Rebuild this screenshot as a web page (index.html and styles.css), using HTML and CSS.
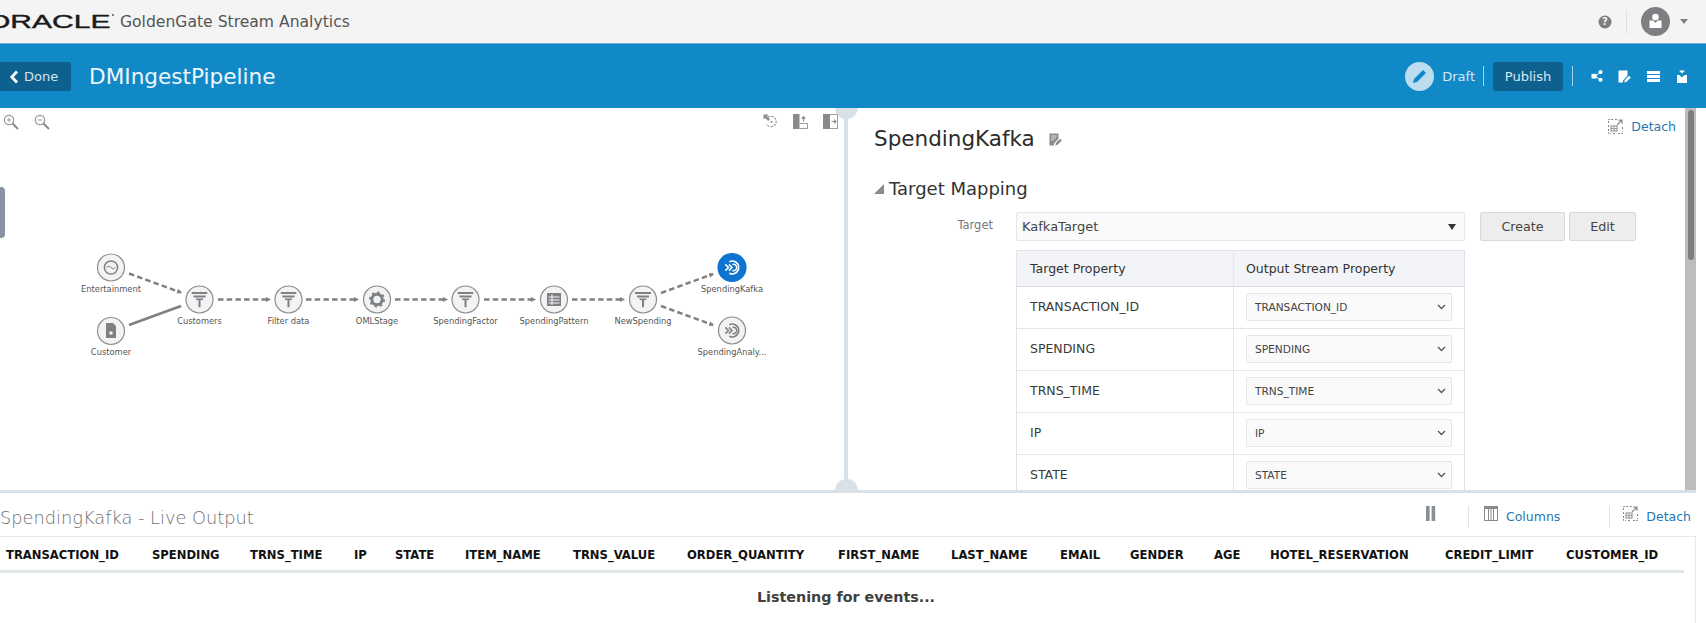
FILE: index.html
```html
<!DOCTYPE html>
<html lang="en">
<head>
<meta charset="utf-8">
<title>GoldenGate Stream Analytics</title>
<link rel="stylesheet" href="styles.css">
</head>
<body>
<svg class="defs" width="0" height="0" aria-hidden="true">
  <defs>
    <symbol id="i-funnel" viewBox="0 0 16 16">
      <rect x="0" y="0.5" width="16" height="2" fill="#7d8186"/>
      <rect x="2" y="4" width="12" height="2" fill="#7d8186"/>
      <rect x="4.5" y="7" width="7" height="1.6" fill="#7d8186"/>
      <rect x="7" y="8" width="2" height="8" fill="#7d8186"/>
    </symbol>
    <symbol id="i-target" viewBox="0 0 18 18">
      <path d="M6 2.6A7.2 7.2 0 1 1 6 15.4" fill="none" stroke="currentColor" stroke-width="1.8"/>
      <path d="M9.5 5.6A3.6 3.6 0 1 1 9.5 12.4" fill="none" stroke="currentColor" stroke-width="1.6"/>
      <path d="M1.5 5.5L5 9L1.5 12.5M5.5 5.5L9 9L5.5 12.5" fill="none" stroke="currentColor" stroke-width="1.7"/>
    </symbol>
    <symbol id="i-detach" viewBox="0 0 15 15">
      <path d="M0.5 4V0.5H5M7 0.5H9M0.5 6V8M0.5 10V14.5H3M5 14.5H8M10 14.5H14.5V12M14.5 10V8" fill="none" stroke="#8a8a8a" stroke-width="1" stroke-dasharray="2 1"/>
      <path d="M9 6L13.5 1.5M10.5 1.2H14V4.7" fill="none" stroke="#8a8a8a" stroke-width="1.2"/>
      <rect x="3" y="7" width="6" height="5" fill="none" stroke="#8a8a8a" stroke-width="1"/>
      <path d="M3 9.5H9M6 7V12" stroke="#8a8a8a" stroke-width="0.8"/>
    </symbol>
    <symbol id="i-note" viewBox="0 0 13 13">
      <path d="M0.5 0.5H9.5V5.5L5 10.5V12.5H0.5Z" fill="currentColor"/>
      <path d="M2 3H8M2 5H7M2 7H5" stroke="#fff" stroke-width="0.9" opacity=".8"/>
      <path d="M6.3 12.5L6.8 10L11 5.8L12.8 7.6L8.6 11.8Z" fill="currentColor"/>
    </symbol>
    <marker id="arrow" markerWidth="6" markerHeight="6" refX="4" refY="3" orient="auto" markerUnits="userSpaceOnUse">
      <path d="M0 0.5L5 3L0 5.5Z" fill="#808080"/>
    </marker>
  </defs>
</svg>

<header class="topbar">
  <div class="brand">
    <span class="logo"><span class="logo-text">ORACLE</span></span>
    <span class="logo-reg"></span>
    <span class="product">GoldenGate Stream Analytics</span>
  </div>
  <div class="top-actions">
    <svg class="help" width="14" height="14" viewBox="0 0 14 14"><circle cx="7" cy="7" r="6.5" fill="#7f7f7f"/><text x="7" y="10.4" class="help-q">?</text></svg>
    <span class="top-sep"></span>
    <svg class="avatar" width="29" height="29" viewBox="0 0 29 29"><circle cx="14.5" cy="14.5" r="14.5" fill="#7d7f82"/><circle cx="14.5" cy="10" r="3.3" fill="#fff"/><path d="M8.5 13.5H12.5L14.5 16L16.5 13.5H20.5V21H8.5Z" fill="#fff"/></svg>
    <span class="caret"></span>
  </div>
</header>

<section class="pipebar">
  <div class="pipe-left">
    <button class="done"><svg width="10" height="14" viewBox="0 0 10 14"><path d="M8 1.5L2.8 7L8 12.5" fill="none" stroke="#fff" stroke-width="2.8"/></svg>Done</button>
    <h1 class="pipe-title">DMIngestPipeline</h1>
  </div>
  <div class="pipe-right">
    <svg class="draft-icon" width="29" height="29" viewBox="0 0 29 29"><circle cx="14.5" cy="14.5" r="14.5" fill="#bcdcef"/><path d="M8 21L9 17L18 8L21 11L12 20Z" fill="#1088c6"/></svg>
    <span class="draft">Draft</span>
    <span class="bar-sep sep-a"></span>
    <button class="publish">Publish</button>
    <span class="bar-sep sep-b"></span>
    <svg class="bar-icon i1" width="13" height="12" viewBox="0 0 14 14"><rect x="0" y="4.5" width="6" height="5.5" fill="#fff"/><path d="M5 7L10 3M5 7.5L10 11" stroke="#fff" stroke-width="1"/><circle cx="10.5" cy="2.4" r="2.4" fill="#fff"/><circle cx="10.5" cy="11.4" r="2.4" fill="#fff"/></svg>
    <svg class="bar-icon i2" width="13" height="13" viewBox="0 0 13 13" color="#fff"><use href="#i-note"/></svg>
    <svg class="bar-icon i3" width="13" height="11" viewBox="0 0 13 11"><rect width="13" height="3" fill="#fff"/><rect y="4" width="13" height="3" fill="#fff"/><rect y="8" width="13" height="3" fill="#fff"/></svg>
    <svg class="bar-icon i4" width="10" height="13" viewBox="0 0 10 13"><path d="M0 5H2.5L5 7.5L7.5 5H10V13H0Z" fill="#fff"/><path d="M2 0.5H8L5 3.5Z" fill="#fff"/></svg>
  </div>
</section>

<main class="workspace">
  <section class="canvas">
    <div class="canvas-tools">
      <div class="tool-group zoom-tools">
        <svg width="16" height="16" viewBox="0 0 16 16"><circle cx="6" cy="6" r="4.7" fill="none" stroke="#9a9a9a" stroke-width="1.2"/><path d="M3.8 6H8.2M6 3.8V8.2" stroke="#9a9a9a"/><path d="M9.5 9.5L15 15" stroke="#8a8a8a" stroke-width="2"/></svg>
        <svg width="16" height="16" viewBox="0 0 16 16"><circle cx="6" cy="6" r="4.7" fill="none" stroke="#9a9a9a" stroke-width="1.2"/><path d="M3.8 6H8.2" stroke="#9a9a9a"/><path d="M9.5 9.5L15 15" stroke="#8a8a8a" stroke-width="2"/></svg>
      </div>
      <div class="tool-group view-tools">
        <svg width="15" height="15" viewBox="0 0 15 15"><path d="M5 3.2A5.2 5.2 0 1 1 3.4 10" fill="none" stroke="#9a9a9a" stroke-width="1.2" stroke-dasharray="2.4 1"/><circle cx="8.5" cy="8" r="1" fill="#8a8a8a"/><path d="M0.5 0.5H5.5L4 2.2L7 5.2L5.2 7L2.2 4L0.5 5.5Z" fill="#8a8a8a"/></svg>
        <svg width="15" height="15" viewBox="0 0 15 15"><rect x="0" y="0" width="6.5" height="15" fill="#8a8a8a"/><path d="M6.5 9.5H14.5V14.5H6.5" fill="none" stroke="#9a9a9a"/><path d="M10.5 7.5V3M8.7 4.8L10.5 2.6L12.3 4.8" fill="none" stroke="#8a8a8a" stroke-width="1.1"/></svg>
        <svg width="15" height="15" viewBox="0 0 15 15"><rect x="0.5" y="0.5" width="14" height="14" fill="#fff" stroke="#a0a0a0"/><rect x="0" y="0" width="7" height="15" fill="#8a8a8a"/><path d="M8.5 7.5H13M11.2 5.6L13 7.5L11.2 9.4" fill="none" stroke="#8a8a8a" stroke-width="1.1"/></svg>
      </div>
    </div>
    <span class="side-handle"></span>
    <svg class="diagram" width="844" height="383" viewBox="0 108 844 383">
      <g class="links">
        <path class="dash" d="M129 273.5L181 292.5"/>
        <path class="solid" d="M129 325L181 306"/>
        <path class="dash" d="M218 299.5H270"/>
        <path class="dash" d="M306 299.5H358"/>
        <path class="dash" d="M395 299.5H447"/>
        <path class="dash" d="M484 299.5H535"/>
        <path class="dash" d="M572 299.5H624"/>
        <path class="dash" d="M661 293L713 274"/>
        <path class="dash" d="M661 306L713 325"/>
      </g>
      <g class="node" transform="translate(111 267.5)">
        <circle r="13.5"/>
        <circle r="6.6" class="glyph-line"/><path d="M-4.5 0Q-2.2 -3 0 0T4.5 0" class="glyph-line thin"/>
        <text y="24">Entertainment</text>
      </g>
      <g class="node" transform="translate(111 331)">
        <circle r="13.5"/>
        <path d="M-5 -8H2L5 -5V7H-5Z" fill="#7d8186"/><circle cy="2" r="1.8" fill="#f2f2f2"/>
        <text y="24">Customer</text>
      </g>
      <g class="node" transform="translate(199.5 299.5)">
        <circle r="13.5"/><use href="#i-funnel" x="-8" y="-8" width="16" height="16"/>
        <text y="24">Customers</text>
      </g>
      <g class="node" transform="translate(288.5 299.5)">
        <circle r="13.5"/><use href="#i-funnel" x="-8" y="-8" width="16" height="16"/>
        <text y="24">Filter data</text>
      </g>
      <g class="node" transform="translate(377 299.5)">
        <circle r="13.5"/>
        <circle r="5.2" fill="none" stroke="#7d8186" stroke-width="3"/>
        <circle r="7" fill="none" stroke="#7d8186" stroke-width="2" stroke-dasharray="2.4 3.1"/>
        <text y="24">OMLStage</text>
      </g>
      <g class="node" transform="translate(465.5 299.5)">
        <circle r="13.5"/><use href="#i-funnel" x="-8" y="-8" width="16" height="16"/>
        <text y="24">SpendingFactor</text>
      </g>
      <g class="node" transform="translate(554 299.5)">
        <circle r="13.5"/>
        <rect x="-7" y="-6.5" width="14" height="13" fill="#7d8186"/>
        <path d="M-5.5 -2.5H5.5M-5.5 0.5H5.5M-5.5 3.5H5.5M-2 -5V5.5" stroke="#f2f2f2" stroke-width="1.1"/>
        <text y="24">SpendingPattern</text>
      </g>
      <g class="node" transform="translate(643 299.5)">
        <circle r="13.5"/><use href="#i-funnel" x="-8" y="-8" width="16" height="16"/>
        <text y="24">NewSpending</text>
      </g>
      <g class="node active" transform="translate(732 267.5)">
        <circle r="14"/><use href="#i-target" x="-8" y="-8" width="16" height="16" color="#fff"/>
        <text y="24">SpendingKafka</text>
      </g>
      <g class="node" transform="translate(732 330.5)">
        <circle r="13.5"/><use href="#i-target" x="-8" y="-8" width="16" height="16" color="#7d8186"/>
        <text y="24.5">SpendingAnaly...</text>
      </g>
    </svg>
  </section>

  <div class="vsplit"><span class="knob knob-top"></span><span class="knob knob-bottom"></span></div>

  <section class="props">
    <div class="props-body">
      <div class="props-head">
        <div class="props-title">
          <h2>SpendingKafka</h2>
          <svg width="13" height="13" viewBox="0 0 13 13" color="#8a8a8a"><use href="#i-note"/></svg>
        </div>
        <a class="link detach-top"><svg width="15" height="15" viewBox="0 0 15 15"><use href="#i-detach"/></svg>Detach</a>
      </div>
      <h3 class="section-title"><span class="tri"></span>Target Mapping</h3>
      <div class="target-row">
        <label class="target-label">Target</label>
        <div class="target-select">KafkaTarget<span class="sel-caret"></span></div>
        <button class="btn btn-create">Create</button>
        <button class="btn btn-edit">Edit</button>
      </div>
      <div class="map-table">
        <div class="map-row map-head"><div class="cell-a">Target Property</div><div class="cell-b">Output Stream Property</div></div>
        <div class="map-row"><div class="cell-a">TRANSACTION_ID</div><div class="cell-b"><div class="mini-select">TRANSACTION_ID<svg width="9" height="6" viewBox="0 0 9 6"><path d="M1 1L4.5 4.5L8 1" fill="none" stroke="#555" stroke-width="1.3"/></svg></div></div></div>
        <div class="map-row"><div class="cell-a">SPENDING</div><div class="cell-b"><div class="mini-select">SPENDING<svg width="9" height="6" viewBox="0 0 9 6"><path d="M1 1L4.5 4.5L8 1" fill="none" stroke="#555" stroke-width="1.3"/></svg></div></div></div>
        <div class="map-row"><div class="cell-a">TRNS_TIME</div><div class="cell-b"><div class="mini-select">TRNS_TIME<svg width="9" height="6" viewBox="0 0 9 6"><path d="M1 1L4.5 4.5L8 1" fill="none" stroke="#555" stroke-width="1.3"/></svg></div></div></div>
        <div class="map-row"><div class="cell-a">IP</div><div class="cell-b"><div class="mini-select">IP<svg width="9" height="6" viewBox="0 0 9 6"><path d="M1 1L4.5 4.5L8 1" fill="none" stroke="#555" stroke-width="1.3"/></svg></div></div></div>
        <div class="map-row"><div class="cell-a">STATE</div><div class="cell-b"><div class="mini-select">STATE<svg width="9" height="6" viewBox="0 0 9 6"><path d="M1 1L4.5 4.5L8 1" fill="none" stroke="#555" stroke-width="1.3"/></svg></div></div></div>
      </div>
    </div>
    <div class="scrollbar"><span class="thumb"></span></div>
  </section>
</main>

<div class="hsplit"></div>

<section class="live">
  <div class="live-head">
    <h2 class="live-title">SpendingKafka - Live Output</h2>
    <div class="live-actions">
      <svg class="pause" width="10" height="15" viewBox="0 0 10 15"><rect width="3.6" height="15" fill="#8a8f94"/><rect x="5.6" width="3.6" height="15" fill="#8a8f94"/></svg>
      <span class="live-sep sep-c"></span>
      <a class="link columns"><svg width="14" height="15" viewBox="0 0 14 15"><rect x="0.5" y="0.5" width="13" height="14" fill="none" stroke="#8a8a8a"/><rect y="0" width="14" height="3" fill="#8a8a8a"/><path d="M4.5 3V15M7 3V15M9.5 3V15" stroke="#8a8a8a"/></svg>Columns</a>
      <span class="live-sep sep-d"></span>
      <a class="link detach-bottom"><svg width="15" height="15" viewBox="0 0 15 15"><use href="#i-detach"/></svg>Detach</a>
    </div>
  </div>
  <div class="grid-wrap">
    <div class="grid-head">
      <div>TRANSACTION_ID</div><div>SPENDING</div><div>TRNS_TIME</div><div>IP</div><div>STATE</div><div>ITEM_NAME</div><div>TRNS_VALUE</div><div>ORDER_QUANTITY</div><div>FIRST_NAME</div><div>LAST_NAME</div><div>EMAIL</div><div>GENDER</div><div>AGE</div><div>HOTEL_RESERVATION</div><div>CREDIT_LIMIT</div><div>CUSTOMER_ID</div>
    </div>
    <p class="listening">Listening for events...</p>
  </div>
</section>
</body>
</html>
```
FILE: styles.css
```css
* { box-sizing: border-box; }
html, body { margin: 0; padding: 0; }
body {
  width: 1706px;
  height: 623px;
  overflow: hidden;
  background: #fff;
  font-family: "DejaVu Sans", sans-serif;
  color: #333;
  display: flex;
  flex-direction: column;
}
h1, h2, h3, p { margin: 0; font-weight: 400; }
button { font-family: inherit; cursor: pointer; }
.defs { position: absolute; }

/* top header */
.topbar {
  flex: 0 0 44px;
  background: #f4f4f4;
  border-bottom: 1px solid #6fb2d9;
  display: flex;
  align-items: center;
  justify-content: space-between;
  padding-right: 18px;
}
.brand { display: flex; align-items: center; position: relative; }
.logo { display: block; width: 116px; height: 20px; overflow: hidden; position: relative; }
.logo-text {
  display: block;
  font-family: "Liberation Sans", sans-serif;
  font-size: 19px;
  line-height: 20px;
  color: #1a1a1a;
  transform-origin: 0 50%;
  transform: scaleX(1.58);
  margin-left: -13px;
  -webkit-text-stroke: 0.4px #1a1a1a;
}
.logo-reg { position: absolute; left: 112px; top: 2px; width: 2px; height: 2px; background: #555; border-radius: 50%; }
.product { font-size: 15.6px; color: #555; margin-left: 4px; }
.top-actions { display: flex; align-items: center; }
.top-sep { width: 1px; height: 24px; background: #e0e0e0; margin: 0 14px 0 14px; }
.caret { width: 0; height: 0; border: 4.5px solid transparent; border-top: 5px solid #808080; border-bottom: 0; margin-left: 10px; }
.help-q { font: 700 10px "DejaVu Sans", sans-serif; fill: #f4f4f4; text-anchor: middle; }

/* pipeline bar */
.pipebar {
  flex: 0 0 64px;
  background: #1289c7;
  display: flex;
  align-items: center;
  justify-content: space-between;
  padding-right: 19px;
}
.pipe-left, .pipe-right { display: flex; align-items: center; }
.done {
  width: 71px;
  height: 29px;
  margin-top: 1px;
  border: 0;
  border-radius: 0 2px 2px 0;
  background: #0e618f;
  color: #d4e4ee;
  font-size: 13px;
  display: flex;
  align-items: center;
  gap: 5px;
  padding: 0 0 0 9px;
}
.pipe-title { font-size: 21.6px; color: #eef7fc; margin-left: 18px; }
.draft { font-size: 13px; color: #d4e8f4; margin-left: 8px; }
.draft-icon { flex: none; }
.bar-sep { width: 1px; height: 20px; background: #a5d2ea; }
.sep-a { margin: 0 9px 0 8px; }
.sep-b { margin: 0 18px 0 9px; }
.publish {
  width: 70px;
  height: 29px;
  border: 0;
  border-radius: 2px;
  background: #0e618f;
  color: #d9e8f1;
  font-size: 13px;
  padding: 0;
}
.bar-icon { flex: none; }
.i2 { margin-left: 14px; }
.i3 { margin-left: 16px; }
.i4 { margin-left: 17px; }

/* workspace */
.workspace { flex: 0 0 382px; display: flex; overflow: hidden; position: relative; }
.canvas { width: 844px; flex: none; position: relative; }
.canvas-tools {
  display: flex;
  justify-content: space-between;
  padding: 6px 6px 0 3px;
  position: relative;
  z-index: 1;
}
.tool-group { display: flex; }
.zoom-tools { gap: 15px; }
.view-tools { gap: 15px; }
.side-handle {
  position: absolute;
  left: -4px;
  top: 79px;
  width: 9px;
  height: 51px;
  border-radius: 4px;
  background: #8a93a3;
}
.diagram { position: absolute; left: 0; top: 0; }
.dash { fill: none; stroke: #808080; stroke-width: 2.5; stroke-dasharray: 5.5 3.2; marker-end: url(#arrow); }
.solid { fill: none; stroke: #808080; stroke-width: 2.8; }
.node > circle:first-child { fill: #f3f3f3; stroke: #8c8c8c; stroke-width: 1.2; }
.node.active > circle:first-child { fill: #0f74cf; stroke: #0f74cf; }
.node text { font-size: 8.3px; fill: #555; text-anchor: middle; font-family: "DejaVu Sans", sans-serif; }
.glyph-line { fill: none; stroke: #7d8186; stroke-width: 1.5; }
.glyph-line.thin { stroke-width: 1; }

.vsplit { width: 4px; flex: none; background: #d8e1e8; position: relative; }
.knob {
  position: absolute;
  left: -9.5px;
  width: 23px;
  height: 23px;
  border-radius: 50%;
  background: #d8e1e8;
}
.knob-top { top: -12px; }
.knob-bottom { bottom: -12px; }

/* properties */
.props { flex: 1; display: flex; min-width: 0; position: relative; padding-right: 10px; }
.props-body { flex: 1; min-width: 0; padding-left: 26px; overflow: hidden; margin-right: 11px; }
.props-head { display: flex; justify-content: space-between; align-items: flex-start; padding-right: 9px; }
.props-title { display: flex; align-items: center; gap: 14px; padding-top: 16px; }
.props-title h2 { font-size: 21.5px; color: #2c2c2c; line-height: 30px; }
.link { display: flex; align-items: center; gap: 8px; font-size: 12.5px; color: #1f78b4; }
.detach-top { padding-top: 11px; }
.section-title {
  font-size: 18px;
  color: #333;
  line-height: 26px;
  margin-top: 22px;
  display: flex;
  align-items: center;
  gap: 5px;
}
.tri { width: 0; height: 0; border-style: solid; border-width: 0 0 10px 10px; border-color: transparent transparent #8a8a8a transparent; }
.target-row { display: flex; align-items: center; margin-top: 10px; height: 29px; }
.target-label { width: 145px; text-align: right; font-size: 11.5px; color: #777; flex: none; margin-right: 23px; margin-left: -26px; margin-top: -3px; }
.target-select {
  width: 449px;
  height: 29px;
  border: 1px solid #e6e6e6;
  border-radius: 2px;
  background: #fafafa;
  font-size: 13px;
  color: #444;
  padding: 0 8px 0 5px;
  display: flex;
  align-items: center;
  justify-content: space-between;
  flex: none;
}
.sel-caret { width: 0; height: 0; border: 4.5px solid transparent; border-top: 6px solid #333; border-bottom: 0; }
.btn {
  height: 29px;
  border: 1px solid #d9d9d9;
  border-radius: 2px;
  background: #ededed;
  color: #444;
  font-size: 12.7px;
  padding: 0;
}
.btn-create { width: 85px; margin-left: 15px; }
.btn-edit { width: 67px; margin-left: 4px; }
.map-table { width: 449px; margin: 9px 0 0 142px; border: 1px solid #dfe3e8; border-bottom: 0; }
.map-row { display: flex; height: 42px; border-bottom: 1px solid #e3e6ea; font-size: 12.5px; color: #3a3a3a; align-items: stretch; }
.map-head { height: 36px; background: #f2f4f8; border-bottom: 1px solid #d9dde2; color: #333; }
.cell-a { width: 217px; flex: none; padding-left: 13px; display: flex; align-items: center; border-right: 1px solid #e3e6ea; padding-bottom: 2px; }
.cell-b { flex: 1; padding: 0 12px 1px 12px; display: flex; align-items: center; }
.map-head .cell-a, .map-head .cell-b { padding-bottom: 0; }
.mini-select {
  width: 100%;
  height: 28px;
  border: 1px solid #e6e6e6;
  border-radius: 2px;
  background: #fafafa;
  font-size: 10.6px;
  color: #444;
  display: flex;
  align-items: center;
  justify-content: space-between;
  padding: 0 5px 0 8px;
}
.scrollbar { position: absolute; top: 0; right: 10px; bottom: 0; width: 11px; background: #bdbdbd; }
.thumb { display: block; width: 6px; height: 150px; margin: 2px 0 0 3px; background: #7b7f82; border-radius: 3px; }

.hsplit { flex: 0 0 3px; width: 1696px; background: #d8e1e8; position: relative; z-index: 2; }

/* live output */
.live { flex: 1; display: flex; flex-direction: column; width: 1696px; }
.live-head { height: 43px; display: flex; justify-content: space-between; align-items: flex-start; padding-right: 5px; flex: none; }
.live-title { font-family: "DejaVu Sans Light", "DejaVu Sans", sans-serif; font-size: 17.8px; font-weight: 200; color: #707070; margin: 14px 0 0 0; line-height: 22px; }
.live-actions { display: flex; align-items: flex-start; padding-top: 13px; }
.live-actions .link { gap: 8px; height: 22px; align-items: flex-start; }
.live-actions .columns, .live-actions .detach-bottom { line-height: 21px; }
.live-sep { width: 1px; height: 22px; background: #e2e2e2; }
.sep-c { margin: 0 15px 0 32px; }
.sep-d { margin: 0 13px 0 49px; }
.grid-wrap { flex: 1; border-top: 1px solid #e6e8ea; border-right: 1px solid #e6e8ea; }
.grid-head {
  display: grid;
  grid-template-columns: 142px 98px 104px 41px 70px 108px 114px 151px 113px 109px 70px 84px 56px 175px 121px 127px;
  width: 1684px;
  font-size: 11.6px;
  font-weight: 700;
  color: #111;
  height: 36px;
  border-bottom: 3px solid #e1e6e9;
}
.grid-head div { padding: 11px 0 0 10px; white-space: nowrap; }
.grid-head div:first-child { padding-left: 6px; }
.listening { text-align: center; font-size: 14.3px; font-weight: 700; color: #404040; margin-top: 15px; line-height: 18px; width: 1692px; }
```
